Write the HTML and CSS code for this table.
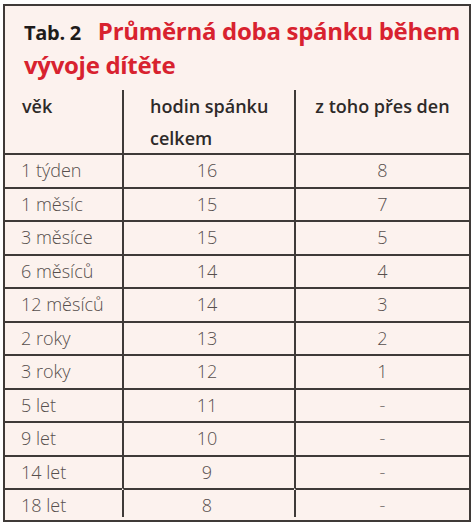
FILE: index.html
```html
<!DOCTYPE html>
<html lang="cs">
<head>
<meta charset="utf-8">
<title>Tab. 2</title>
<link rel="stylesheet" href="styles.css">
</head>
<body>
<div class="card">
  <h1 class="title">
    <span class="line"><span class="tab">Tab. 2</span><span class="red">Průměrná doba spánku během</span></span>
    <span class="line red">vývoje dítěte</span>
  </h1>
  <div class="grid">
    <div class="row head">
      <div class="cell c1">věk</div>
      <div class="cell c2">hodin spánku<br>celkem</div>
      <div class="cell c3">z toho přes den</div>
    </div>
    <div class="row"><div class="cell c1">1 týden</div><div class="cell c2">16</div><div class="cell c3">8</div></div>
    <div class="row"><div class="cell c1">1 měsíc</div><div class="cell c2">15</div><div class="cell c3">7</div></div>
    <div class="row"><div class="cell c1">3 měsíce</div><div class="cell c2">15</div><div class="cell c3">5</div></div>
    <div class="row"><div class="cell c1">6 měsíců</div><div class="cell c2">14</div><div class="cell c3">4</div></div>
    <div class="row"><div class="cell c1">12 měsíců</div><div class="cell c2">14</div><div class="cell c3">3</div></div>
    <div class="row"><div class="cell c1">2 roky</div><div class="cell c2">13</div><div class="cell c3">2</div></div>
    <div class="row"><div class="cell c1">3 roky</div><div class="cell c2">12</div><div class="cell c3">1</div></div>
    <div class="row"><div class="cell c1">5 let</div><div class="cell c2">11</div><div class="cell c3 dash">-</div></div>
    <div class="row"><div class="cell c1">9 let</div><div class="cell c2">10</div><div class="cell c3 dash">-</div></div>
    <div class="row"><div class="cell c1">14 let</div><div class="cell c2">9</div><div class="cell c3 dash">-</div></div>
    <div class="row"><div class="cell c1">18 let</div><div class="cell c2">8</div><div class="cell c3 dash">-</div></div>
  </div>
</div>
</body>
</html>
```

FILE: styles.css
```css
html, body {
  margin: 0;
  padding: 0;
  background: #ffffff;
}

.card {
  box-sizing: border-box;
  margin: 4px 0 0 3px;
  width: 468px;
  height: 518px;
  border: 2px solid #3f3a38;
  background: #fcf2ee;
  font-family: "Open Sans", "Liberation Sans", sans-serif;
}

.title {
  margin: 0;
  padding: 9px 4px 0 19px;
  font-size: 24px;
  line-height: 32px;
  font-weight: 700;
  letter-spacing: -0.3px;
}

.line {
  display: block;
  white-space: nowrap;
}

.tab {
  font-size: 20px;
  color: #1e1b1b;
  margin-right: 17px;
}

.red {
  color: #d8222f;
}

.grid {
  margin-top: 9px;
  display: grid;
  grid-template-columns: 117px 172px 1fr;
}

.row {
  display: contents;
}

.cell {
  box-sizing: border-box;
  height: 33.5px;
  line-height: 31.5px;
  border-top: 2px solid #3f3a38;
  font-size: 18px;
  font-weight: 300;
  color: #574f4d;
  white-space: nowrap;
}

.cell.c1 {
  padding-left: 16px;
}

.cell.c2,
.cell.c3 {
  border-left: 2px solid #3f3a38;
  text-align: center;
}

.cell.c2 {
  padding-right: 4px;
}

.dash {
  color: #7a7270;
}

.head .cell {
  height: 63px;
  line-height: 32px;
  border-top: none;
  font-size: 18px;
  font-weight: 600;
  color: #2e2a29;
}

.head .cell.c1 {
  padding-left: 17px;
}

.head .cell.c2 {
  text-align: left;
  padding-left: 26px;
}

.row:last-child .cell.c2,
.row:last-child .cell.c3 {
  border-left-color: transparent;
  background-image: linear-gradient(#3f3a38, #3f3a38);
  background-origin: border-box;
  background-repeat: no-repeat;
  background-size: 2px calc(100% - 5px);
}
```
